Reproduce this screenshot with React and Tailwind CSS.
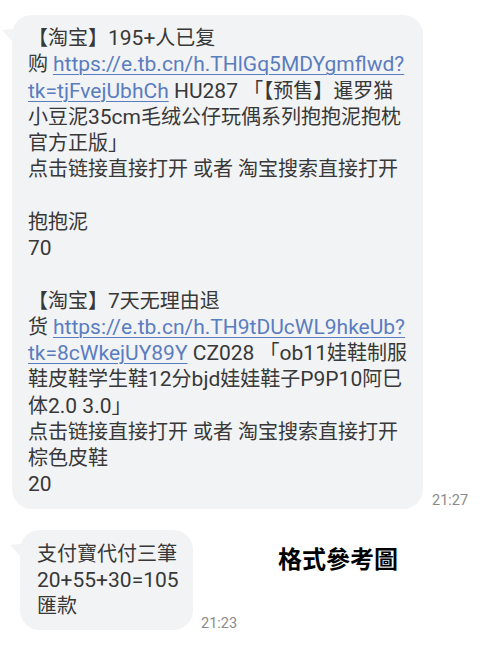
import React from "react";

const Tail = () => (
  <svg
    className="absolute left-[-10px] top-[14px]"
    width="11"
    height="14"
    viewBox="0 0 11 14"
  >
    <polygon points="0,1 11,0 11,13" fill="#f2f3f5" />
  </svg>
);

const A = ({ children }) => (
  <span className="text-[21px] text-[#5a7dc0] underline decoration-1 underline-offset-[3px]">
    {children}
  </span>
);

const E = ({ children }) => <span className="text-[21px]">{children}</span>;

const L = ({ children }) => (
  <div className="whitespace-nowrap h-[26.25px]">{children}</div>
);

export default function App() {
  return (
    <div className="min-h-[650px] bg-white pt-[15px] pl-[12px] font-['Roboto','Noto_Sans_CJK_SC',sans-serif] text-[#383838]">
      <div className="flex items-end gap-[9px]">
        <div className="relative w-[411px] rounded-[20px] bg-[#f2f3f5] pl-[16px] pt-[10px] pb-[11px] text-[20px] leading-[26.25px]">
          <Tail />
          <L>【淘宝】<E>195+</E>人已复</L>
          <L>
            购 <A>https://e.tb.cn/h.THlGq5MDYgmflwd?</A>
          </L>
          <L>
            <A>tk=tjFvejUbhCh</A>
            <E> HU287 </E>「【预售】暹罗猫
          </L>
          <L>小豆泥<E>35cm</E>毛绒公仔玩偶系列抱抱泥抱枕</L>
          <L>官方正版」</L>
          <L>点击链接直接打开 或者 淘宝搜索直接打开</L>
          <L></L>
          <L>抱抱泥</L>
          <L><E>70</E></L>
          <L></L>
          <L>【淘宝】<E>7</E>天无理由退</L>
          <L>
            货 <A>https://e.tb.cn/h.TH9tDUcWL9hkeUb?</A>
          </L>
          <L>
            <A>tk=8cWkejUY89Y</A>
            <E> CZ028 </E>「<E>ob11</E>娃鞋制服
          </L>
          <L>鞋皮鞋学生鞋<E>12</E>分<E>bjd</E>娃娃鞋子<E>P9P10</E>阿巳</L>
          <L>体<E>2.0 3.0</E>」</L>
          <L>点击链接直接打开 或者 淘宝搜索直接打开</L>
          <L>棕色皮鞋</L>
          <L><E>20</E></L>
        </div>
        <div className="text-[14.5px] leading-[17px] text-[#8a8a8a]">
          21:27
        </div>
      </div>

      <div className="mt-[21px] flex items-end pl-[8px]">
        <div className="relative w-[173px] rounded-[20px] bg-[#f2f3f5] pl-[17px] pt-[11px] pb-[11px] text-[20px] leading-[26px] font-['Roboto','Noto_Sans_CJK_TC',sans-serif]">
          <Tail />
          <div className="whitespace-nowrap h-[26px]">支付寶代付三筆</div>
          <div className="whitespace-nowrap h-[26px]"><E>20+55+30=105</E></div>
          <div className="whitespace-nowrap h-[26px]">匯款</div>
        </div>
        <div className="ml-[8px] mb-[-2px] text-[14.5px] leading-[17px] text-[#8a8a8a]">
          21:23
        </div>
        <div className="self-start ml-[41px] mt-[12px] text-[24px] leading-[32px] font-bold text-black font-['Noto_Sans_CJK_TC',sans-serif]">
          格式參考圖
        </div>
      </div>
    </div>
  );
}
